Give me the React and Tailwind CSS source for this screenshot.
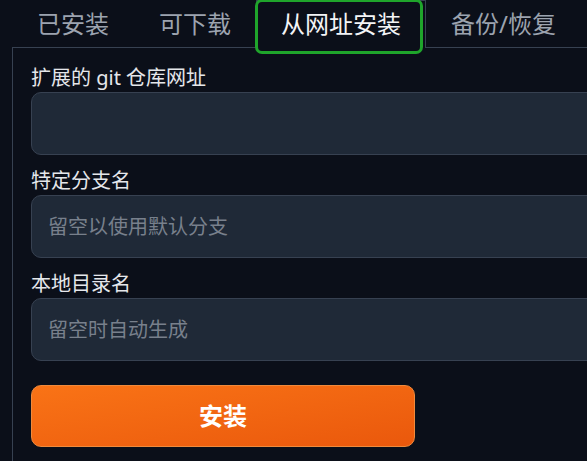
import React from "react";

const tabs = ["已安装", "可下载", "从网址安装", "备份/恢复"];

function Field({ label, placeholder }) {
  return (
    <div className="flex flex-col">
      <div className="h-[28px] leading-[28px] text-[20px] text-[#e5e7eb]">{label}</div>
      <input
        className="h-[63px] w-full rounded-[10px] border border-[#374151] bg-[#1f2937] px-[16px] text-[20px] text-[#e5e7eb] placeholder:text-[#78808c] outline-none"
        placeholder={placeholder}
      />
    </div>
  );
}

export default function App() {
  return (
    <div className="w-[587px] h-[461px] overflow-hidden bg-[#0b0f19] font-[family-name:'Noto_Sans','Noto_Sans_CJK_SC',sans-serif]">
      <div className="w-[640px] pl-[12px]">
        <div className="flex h-[47px] relative z-10">
          {tabs.map((t, i) => {
            const active = i === 2;
            return (
              <div
                key={t}
                className={
                  active
                    ? "relative h-[48px] px-[24px] border border-b-0 border-[#374151] bg-[#0b0f19] text-[#f3f4f6] text-[24px] leading-[46px]"
                    : "relative h-[47px] px-[24px] border border-transparent text-[#9ca3af] text-[24px] leading-[46px]"
                }
              >
                {t}
                {active && (
                  <span className="absolute left-[-2px] right-[2px] top-[-2px] bottom-[-6px] rounded-[7px] border-[3px] border-[#1fa52b] pointer-events-none" />
                )}
              </div>
            );
          })}
        </div>
        <div className="border-l border-t border-[#374151] pl-[18px] pt-[16px] flex flex-col gap-[12px] h-[460px]">
          <Field label="扩展的 git 仓库网址" placeholder="" />
          <Field label="特定分支名" placeholder="留空以使用默认分支" />
          <Field label="本地目录名" placeholder="留空时自动生成" />
          <button className="mt-[12px] h-[62px] w-[384px] rounded-[10px] border border-[#f08a3c] bg-gradient-to-br from-[#f97316] to-[#ea580c] text-white text-[24px] font-bold">
            安装
          </button>
        </div>
      </div>
    </div>
  );
}
